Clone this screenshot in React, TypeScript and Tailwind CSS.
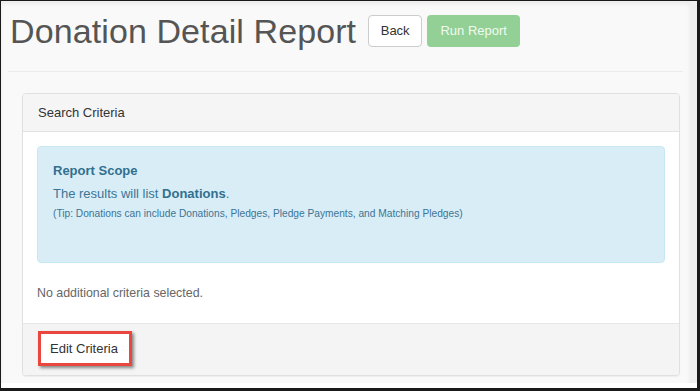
import React from 'react';

const font = { fontFamily: '"Liberation Sans", Arial, Helvetica, sans-serif' };

function PageHeader() {
  return (
    <div className="mx-[7px] flex h-[71px] items-center border-b border-[#ececec] pl-[2px] pb-[10px]">
      <h1 className="text-[34px] leading-none text-[#555] tracking-[0.1px]">Donation Detail Report</h1>
      <div className="ml-[12px] flex gap-[5px]">
        <button className="h-[32px] w-[54px] rounded-[4px] border border-[#ccc] bg-white text-[13px] text-[#333]">
          Back
        </button>
        <button className="h-[32px] w-[93px] rounded-[4px] bg-[#93d095] text-[13px] text-[#f1faf1]">
          Run Report
        </button>
      </div>
    </div>
  );
}

function ReportScope() {
  return (
    <div className="h-[117px] rounded-[4px] border border-[#c6e8f3] bg-[#d9edf7] px-[15px] pt-[14px] text-[#31708f]">
      <div className="text-[13px] font-bold leading-[20px]">Report Scope</div>
      <p className="mt-[4px] text-[13px] leading-[18px] text-[#3b7596]">
        The results will list <span className="font-bold text-[#31708f]">Donations</span>.
      </p>
      <p className="mt-[4px] text-[10.2px] leading-[14px] text-[#3b7596]">
        (Tip: Donations can include Donations, Pledges, Pledge Payments, and Matching Pledges)
      </p>
    </div>
  );
}

export default function App() {
  return (
    <div
      className="flex h-[391px] w-[700px] flex-col overflow-hidden border-t border-l border-r-[3px] border-b-[3px] border-[#1a1a1a] bg-white"
      style={font}
    >
      <div className="flex h-[382px] flex-col border-r-[7px] border-[#f0f0f0] bg-[#f9f9f9] shadow-[inset_0_3px_4px_rgba(0,0,0,0.06)]">
        <PageHeader />

        <div className="ml-[21px] mt-[21px] w-[658px] overflow-hidden rounded-[4px] border border-[#e0e0e0] bg-white shadow-[0_1px_1px_rgba(0,0,0,0.05)]">
          <div className="flex h-[38px] items-center border-b border-[#e2e2e2] bg-[#f5f5f5] px-[15px] text-[13px] text-[#333]">
            Search Criteria
          </div>

          <div className="px-[14px] pt-[14px]">
            <ReportScope />
            <div className="flex h-[60px] items-center text-[12.4px] text-[#666]">
              No additional criteria selected.
            </div>
          </div>

          <div className="h-[52px] border-t border-[#e6e6e6] bg-[#f4f4f4] px-[15px] pt-[7px]">
            <button className="h-[35px] w-[94px] border-[3px] border-[#e9473d] bg-white pl-[9px] text-left text-[13px] text-[#333] shadow-[2px_2px_3px_rgba(0,0,0,0.45)]">
              Edit Criteria
            </button>
          </div>
        </div>
      </div>
    </div>
  );
}
